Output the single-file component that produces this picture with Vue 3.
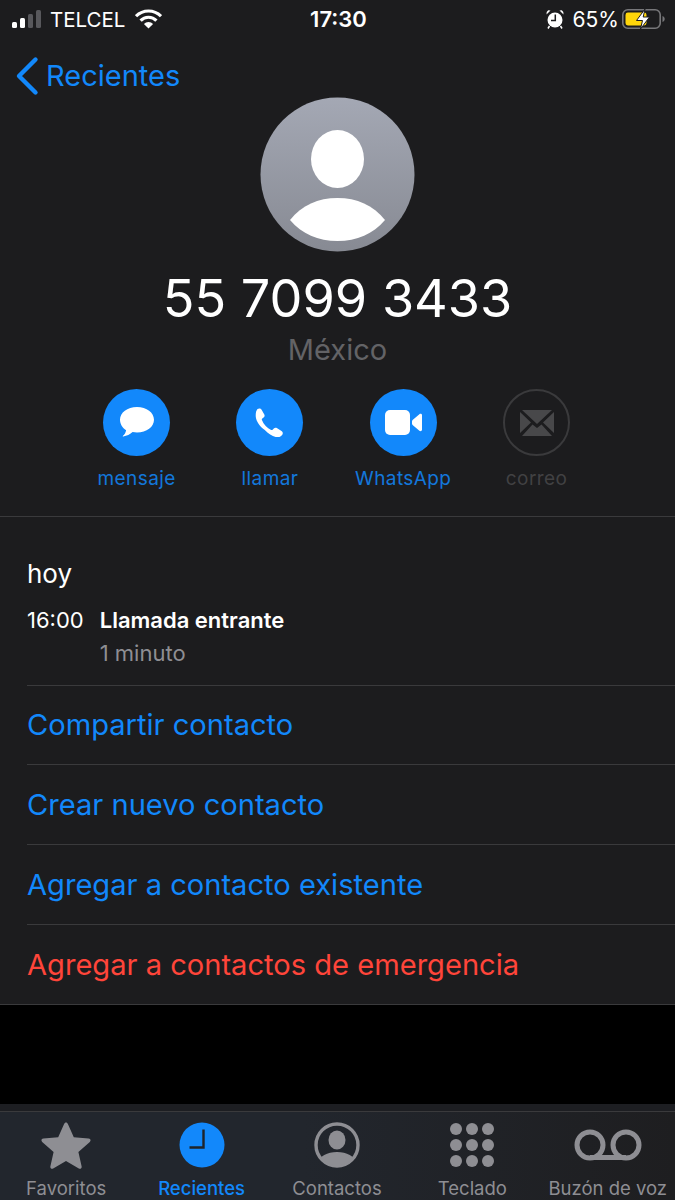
<script setup>
const actions = [
  { label: 'mensaje', icon: 'message' },
  { label: 'llamar', icon: 'phone' },
  { label: 'WhatsApp', icon: 'video' },
  { label: 'correo', icon: 'mail', disabled: true }
]

const rows = [
  { label: 'Compartir contacto' },
  { label: 'Crear nuevo contacto' },
  { label: 'Agregar a contacto existente' },
  { label: 'Agregar a contactos de emergencia', danger: true }
]

const dots = [0, 1, 2, 3, 4, 5, 6, 7, 8]
</script>

<template>
  <div class="screen">
    <div class="top">
      <header class="status">
        <div class="status-left">
          <div class="signal">
            <i class="bar b1"></i>
            <i class="bar b2"></i>
            <i class="bar b3 off"></i>
            <i class="bar b4 off"></i>
          </div>
          <span class="carrier">TELCEL</span>
          <svg class="wifi" width="27" height="20" viewBox="0 0 27 20">
            <path d="M1 7.2a17.6 17.6 0 0 1 25 0" fill="none" stroke="#fff" stroke-width="3.2" />
            <path d="M5.6 11.6a11 11 0 0 1 15.8 0" fill="none" stroke="#fff" stroke-width="3.2" />
            <path d="M13.5 19.6l-4.6-4.7a6.5 6.5 0 0 1 9.2 0z" fill="#fff" />
          </svg>
        </div>
        <div class="clock">17:30</div>
        <div class="status-right">
          <svg class="alarm" width="18" height="20" viewBox="0 0 18 20">
            <circle cx="9" cy="11" r="7.500" fill="#fff" />
            <path d="M.5 5.500 4.500 1.600 2.200 1.200.7 3z M17.500 5.500 13.500 1.600 15.800 1.200 17.300 3z" fill="#fff" />
            <path d="M9.300 5.500v6H5" fill="none" stroke="#1c1c1e" stroke-width="1.500" />
            <path d="M3.500 17 2 19.500M14.500 17l1.500 2.500" stroke="#fff" stroke-width="1.500" />
          </svg>
          <span class="pct">65%</span>
          <svg class="battery" width="43" height="22" viewBox="0 0 43 22">
            <rect x="0.800" y="1.800" width="37.400" height="18.400" rx="5" fill="none" stroke="#77777a" stroke-width="1.600" />
            <rect x="3.500" y="4.500" width="21" height="13" rx="2.400" fill="#ffd60a" />
            <path d="M40.500 8v6c1.400-.5 2.200-1.600 2.200-3s-.8-2.500-2.200-3z" fill="#77777a" />
            <path d="M23 1 14.500 12.500h6L18.500 21 27.500 9h-6.300z" fill="#fff" stroke="#1c1c1e" stroke-width="1" />
          </svg>
        </div>
      </header>

      <nav class="nav">
        <svg class="chevron" width="24" height="40" viewBox="0 0 24 40">
          <path d="M20.500 3.500 4 20l16.500 16.500" fill="none" stroke="#1288fb" stroke-width="4.400" stroke-linecap="round" stroke-linejoin="round" />
        </svg>
        <span>Recientes</span>
      </nav>

      <div class="profile">
        <svg class="avatar" width="155" height="155" viewBox="0 0 155 155">
          <defs>
            <linearGradient id="avatarFill" x1="0" y1="0" x2="0" y2="1">
              <stop offset="0" stop-color="#a4a8b4" />
              <stop offset="1" stop-color="#878a93" />
            </linearGradient>
          </defs>
          <circle cx="77.500" cy="77.500" r="77" fill="url(#avatarFill)" />
          <ellipse cx="77.500" cy="62" rx="26.500" ry="29" fill="#fff" />
          <path d="M30 123c12-15 28-22 47.500-22S113 108 125 123c-12 14-28 21-47.500 21S42 137 30 123z" fill="#fff" />
        </svg>
        <h1 class="number">55 7099 3433</h1>
        <div class="country">México</div>
      </div>

      <div class="actions">
        <div
          v-for="action in actions"
          :key="action.label"
          class="action"
          :class="{ disabled: action.disabled }"
        >
          <div class="action-icon">
            <svg v-if="action.icon === 'message'" width="36" height="33" viewBox="0 0 36 33">
              <path d="M18 1c9.700 0 17 5.700 17 12.700S27.700 26.500 18 26.500c-1.500 0-3-.1-4.400-.4-2.300 2.300-6 4-9.300 4.400-.6 0-.7-.5-.3-.8 1.500-1.200 2.800-3.300 3.100-5.500C3.400 21.800 1 18 1 13.700 1 6.700 8.300 1 18 1z" fill="#fff" />
            </svg>
            <svg v-else-if="action.icon === 'phone'" width="29" height="29" viewBox="0 0 29 29">
              <path d="M2.500 1C4 0 5.800.3 6.600 1.700l2.700 4.800c.6 1.100.3 2.200-.7 3l-1.300 1c-.5.4-.6.900-.4 1.500.9 2.200 2.200 4.200 3.800 5.900 1.600 1.700 3.400 3 5.500 4 .5.200 1 .2 1.400-.2l1.200-1.200c.9-.8 2-1 3-.4l4.700 2.800c1.300.8 1.700 2.400.8 3.800-1 1.500-2.800 2.800-5 2.600-3.900-.4-8.600-3.100-12.500-7.200C4.200 18 1.300 13 .8 9 .5 5.800 1 2.500 2.500 1z" fill="#fff" />
            </svg>
            <svg v-else-if="action.icon === 'video'" width="37" height="25" viewBox="0 0 37 25">
              <rect x="0" y="0" width="25" height="25" rx="5" fill="#fff" />
              <path d="M27 11.500c0-.6.200-1 .6-1.400l6.800-5.900c1-.8 2.600-.2 2.600 1v14.600c0 1.200-1.600 1.800-2.600 1l-6.800-5.900c-.4-.4-.6-.8-.6-1.400z" fill="#fff" />
            </svg>
            <svg v-else width="34" height="26" viewBox="0 0 34 26">
              <path d="M2 0h30L17 14z" fill="#48484a" />
              <path d="M0 2v21l11-10.500z M34 2v21L23 12.500z" fill="#48484a" />
              <path d="M2 26 12.500 14.500l4.500 3.500 4.500-3.500L32 26z" fill="#48484a" />
            </svg>
          </div>
          <div class="action-label">{{ action.label }}</div>
        </div>
      </div>
    </div>

    <section class="history">
      <div class="day">hoy</div>
      <div class="call">
        <span class="call-time">16:00</span>
        <div>
          <div class="call-title">Llamada entrante</div>
          <div class="call-length">1 minuto</div>
        </div>
      </div>
    </section>

    <ul class="options">
      <li v-for="row in rows" :key="row.label" class="option" :class="{ danger: row.danger }">
        <span class="option-text">{{ row.label }}</span>
      </li>
    </ul>

    <div class="gap"></div>

    <footer class="tabs">
      <div class="tab">
        <svg width="52" height="48" viewBox="0 0 52 48">
          <path d="M26 1.500c.9 0 1.500.6 1.900 1.500l5.900 13.200 14.800 1.400c2 .2 2.600 2 1.200 3.300L38.400 31l3.200 14.300c.4 2-1.200 3-2.800 2.100L26 40l-12.800 7.400c-1.600.9-3.200-.1-2.800-2.100L13.600 31 2.200 20.900C.8 19.600 1.400 17.800 3.400 17.600l14.800-1.400L24.100 3c.4-.9 1-1.500 1.900-1.500z" fill="#8e8e93" />
        </svg>
        <span>Favoritos</span>
      </div>
      <div class="tab active">
        <svg width="46" height="46" viewBox="0 0 46 46">
          <circle cx="23" cy="23" r="22.500" fill="#1288fb" />
          <path d="M24.500 7.500V25.500H10.500" fill="none" stroke="#1f2329" stroke-width="2.400" />
        </svg>
        <span>Recientes</span>
      </div>
      <div class="tab">
        <svg width="46" height="46" viewBox="0 0 46 46">
          <defs>
            <clipPath id="contactClip"><circle cx="23" cy="23" r="20.500" /></clipPath>
          </defs>
          <circle cx="23" cy="23" r="21" fill="none" stroke="#8e8e93" stroke-width="3.400" />
          <ellipse cx="23" cy="18" rx="8.500" ry="9.500" fill="#8e8e93" />
          <ellipse cx="23" cy="40" rx="18" ry="10" fill="#8e8e93" clip-path="url(#contactClip)" />
        </svg>
        <span>Contactos</span>
      </div>
      <div class="tab">
        <div class="keypad">
          <i v-for="dot in dots" :key="dot"></i>
        </div>
        <span>Teclado</span>
      </div>
      <div class="tab">
        <svg width="68" height="32" viewBox="0 0 68 32">
          <circle cx="16" cy="16" r="13" fill="none" stroke="#8e8e93" stroke-width="5" />
          <circle cx="52" cy="16" r="13" fill="none" stroke="#8e8e93" stroke-width="5" />
          <path d="M16 28.500H52" stroke="#8e8e93" stroke-width="5" />
        </svg>
        <span>Buzón de voz</span>
      </div>
    </footer>
  </div>
</template>

<style scoped>
.screen {
  width: 675px;
  height: 1200px;
  display: flex;
  flex-direction: column;
  background: #000;
  color: #fff;
  font-family: Inter, "Liberation Sans", sans-serif;
  overflow: hidden;
}

.top {
  height: 516px;
  flex: none;
  background: #1c1c1e;
  border-bottom: 1px solid #3a3a3c;
}

.status {
  height: 38px;
  display: grid;
  grid-template-columns: 1fr auto 1fr;
  align-items: center;
  padding: 0 10px 0 12px;
}

.status-left,
.status-right {
  display: flex;
  align-items: center;
}

.status-right {
  justify-content: flex-end;
}

.signal {
  width: 30px;
  height: 18px;
  display: flex;
  align-items: flex-end;
  gap: 3px;
}

.bar {
  width: 5px;
  border-radius: 1.500px;
  background: #fff;
}

.bar.off {
  background: #58585c;
}

.b1 { height: 6px; }
.b2 { height: 10px; }
.b3 { height: 14px; }
.b4 { height: 18px; }

.carrier {
  margin-left: 8px;
  font-size: 20.500px;
}

.wifi {
  margin-left: 10px;
}

.clock {
  font-size: 22px;
  font-weight: 600;
}

.alarm {
  margin-right: 9px;
}

.pct {
  margin-right: 3px;
  font-size: 21px;
}

.nav {
  height: 76px;
  display: flex;
  align-items: flex-start;
  padding-left: 15px;
  color: #1288fb;
  font-size: 29px;
}

.nav span {
  margin: 20px 0 0 7px;
  line-height: 36px;
}

.chevron {
  margin-top: 18px;
}

.profile {
  margin-top: -17px;
  display: flex;
  flex-direction: column;
  align-items: center;
}

.avatar {
  display: block;
}

.number {
  margin: 14px 0 0;
  font-size: 52.200px;
  font-weight: 400;
  line-height: 64px;
}

.country {
  margin-top: 2px;
  color: #636366;
  font-size: 29px;
  line-height: 36px;
}

.actions {
  margin-top: 21px;
  padding-left: 70px;
  display: grid;
  grid-template-columns: repeat(4, 133.300px);
}

.action {
  display: flex;
  flex-direction: column;
  align-items: center;
  color: #1288fb;
}

.action-icon {
  width: 67px;
  height: 67px;
  display: flex;
  align-items: center;
  justify-content: center;
  border-radius: 50%;
  background: #1288fb;
}

.action-label {
  margin-top: 11px;
  font-size: 19px;
  letter-spacing: 0.400px;
  line-height: 24px;
  opacity: 0.85;
}

.action.disabled {
  color: #48484a;
}

.action.disabled .action-icon {
  background: none;
  border: 2px solid #3a3a3c;
  box-sizing: border-box;
}

.history {
  height: 168px;
  flex: none;
  box-sizing: border-box;
  padding: 40px 0 0 27px;
  background: #1c1c1e;
}

.day {
  font-size: 26px;
  line-height: 34px;
}

.call {
  margin-top: 16px;
  display: flex;
  gap: 16px;
  font-size: 22px;
  line-height: 26px;
}

.call-title {
  font-weight: 600;
}

.call-length {
  margin-top: 7px;
  color: #8e8e93;
}

.options {
  flex: none;
  margin: 0;
  padding: 0;
  list-style: none;
  background: #1c1c1e;
  border-bottom: 1px solid #3a3a3c;
}

.option {
  padding-left: 27px;
  color: #1288fb;
  font-size: 29.100px;
}

.option-text {
  display: block;
  height: 79px;
  line-height: 80px;
  border-top: 1px solid #3a3a3c;
}

.option:first-child .option-text {
  height: 78px;
  line-height: 77px;
}

.option.danger {
  color: #ff453a;
}

.gap {
  flex: 1;
}

.tabs {
  height: 89px;
  flex: none;
  display: grid;
  grid-template-columns: repeat(5, 135.400px);
  box-sizing: border-box;
  border-top: 1px solid #3a3a3c;
  box-shadow: 0 -7px 0 #1d1e22;
  background: linear-gradient(90deg, #22262d 0%, #22262d 45%, #1e1e20 100%);
}

.tab {
  position: relative;
  display: flex;
  flex-direction: column;
  align-items: center;
  padding-right: 3px;
  color: #8e8e93;
  font-size: 18.500px;
}

.tab svg,
.keypad {
  position: absolute;
  top: 33px;
  transform: translateY(-50%);
}

.tab span {
  position: absolute;
  bottom: 0;
  line-height: 24px;
  white-space: nowrap;
}

.tab.active {
  color: #1288fb;
  font-weight: 500;
}

.keypad {
  width: 44px;
  display: grid;
  grid-template-columns: repeat(3, 12px);
  justify-content: space-between;
  row-gap: 4px;
}

.keypad i {
  width: 12px;
  height: 12px;
  border-radius: 50%;
  background: #8e8e93;
}
</style>
